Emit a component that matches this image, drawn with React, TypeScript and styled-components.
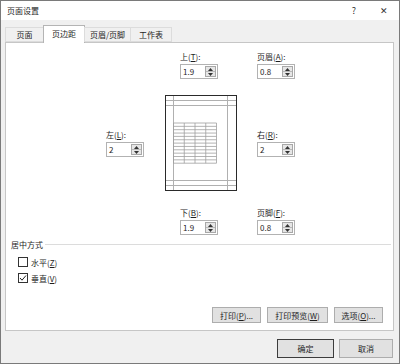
import React from "react";
import styled, { createGlobalStyle } from "styled-components";

const Global = createGlobalStyle`
  html, body { margin: 0; padding: 0; background: #fff; }
  body { font-family: "Noto Sans CJK SC", "Noto Sans", sans-serif; }
  * { box-sizing: border-box; }
`;

const Window = styled.div`
  width: 400px;
  height: 364px;
  border: 1px solid #7a7a7a;
  display: flex;
  flex-direction: column;
  background: #f0f0f0;
  font-family: "Noto Sans CJK SC", "Noto Sans", sans-serif;
  font-size: 8px;
  color: #1e1e1e;
  overflow: hidden;
`;

const TitleBar = styled.div`
  height: 19px;
  flex: none;
  background: #fff;
  display: flex;
  align-items: center;
  padding-left: 6px;
`;

const Title = styled.div`
  flex: 1;
  font-size: 8px;
  line-height: 12px;
`;

const TitleBtn = styled.div`
  width: 30px;
  height: 19px;
  display: flex;
  align-items: center;
  justify-content: center;
  font-size: 9px;
  color: #333;
`;

const Body = styled.div`
  flex: 1;
  display: flex;
  flex-direction: column;
  padding: 5px 5px 0 4px;
`;

const TabList = styled.div`
  height: 17px;
  display: flex;
  align-items: flex-end;
  padding-left: 1px;
  position: relative;
  z-index: 1;
`;

const Tab = styled.div<{ $active?: boolean; $w: number }>`
  width: ${(p) => p.$w}px;
  height: ${(p) => (p.$active ? 18 : 15)}px;
  margin-bottom: ${(p) => (p.$active ? -1 : 0)}px;
  margin-left: -1px;
  display: flex;
  align-items: center;
  justify-content: center;
  background: ${(p) => (p.$active ? "#fff" : "#f0f0f0")};
  border: 1px solid ${(p) => (p.$active ? "#b4b4b4" : "#dcdcdc")};
  border-bottom: ${(p) => (p.$active ? "none" : "1px solid #dcdcdc")};
  font-size: 8px;
  line-height: 12px;
  padding-bottom: ${(p) => (p.$active ? 2 : 0)}px;
`;

const Panel = styled.div`
  flex: 1;
  background: #fff;
  border: 1px solid #c6c6c6;
  display: flex;
  flex-direction: column;
  padding-top: 8px;
`;

const MarginGrid = styled.div`
  margin-left: 100px;
  display: grid;
  grid-template-columns: 59px 71px 21px 60px;
  grid-template-rows: auto 96px auto;
  row-gap: 16px;
`;

const Field = styled.div<{ $col: number; $row: number; $indent?: number }>`
  grid-column: ${(p) => p.$col};
  grid-row: ${(p) => p.$row};
  margin-left: ${(p) => p.$indent ?? 0}px;
  align-self: center;
  display: flex;
  flex-direction: column;
`;

const Label = styled.div`
  height: 13px;
  line-height: 12px;
  font-size: 8px;
  white-space: nowrap;
`;

const SpinBox = styled.div`
  width: 38px;
  height: 15px;
  border: 1px solid #b2b2b2;
  display: flex;
  align-items: stretch;
  background: #fff;
`;

const SpinValue = styled.div`
  flex: 1;
  padding-left: 2px;
  font-size: 8px;
  line-height: 13px;
`;

const Spinner = styled.div`
  width: 11px;
  margin: 1px 1px 1px 0;
  border: 1px solid #a8a8a8;
  background: #e6e6e6;
  display: flex;
  flex-direction: column;
`;

const SpinHalf = styled.div<{ $top?: boolean }>`
  flex: 1;
  display: flex;
  align-items: center;
  justify-content: center;
  border-bottom: ${(p) => (p.$top ? "1px solid #b8b8b8" : "none")};
`;

const Preview = styled.div`
  grid-column: 2;
  grid-row: 2;
  width: 72px;
  height: 96px;
`;

const GroupHeader = styled.div`
  margin-top: 4px;
  height: 12px;
  display: flex;
  align-items: center;
  padding-left: 5px;
  margin-right: 2px;
  gap: 2px;
  font-size: 8px;
  line-height: 12px;
`;

const Rule = styled.div`
  flex: 1;
  height: 1px;
  background: #dcdcdc;
  margin-top: -1px;
`;

const CheckList = styled.div`
  margin-top: 3px;
  padding-left: 12px;
  display: flex;
  flex-direction: column;
`;

const CheckRow = styled.div`
  height: 16px;
  display: flex;
  align-items: center;
  gap: 3px;
  font-size: 8px;
`;

const Box = styled.div`
  width: 10px;
  height: 10px;
  border: 1px solid #333;
  background: #fff;
  display: flex;
  align-items: center;
  justify-content: center;
`;

const PanelButtons = styled.div`
  margin-top: 21px;
  margin-right: 10px;
  display: flex;
  justify-content: flex-end;
  gap: 6px;
`;

const Button = styled.div<{ $w: number; $h: number; $default?: boolean }>`
  width: ${(p) => p.$w}px;
  height: ${(p) => p.$h}px;
  background: #e1e1e1;
  border: 1px solid ${(p) => (p.$default ? "#3c3c3c" : "#adadad")};
  display: flex;
  align-items: center;
  justify-content: center;
  font-size: 8px;
  white-space: nowrap;
`;

const DialogButtons = styled.div`
  height: 32px;
  flex: none;
  padding: 8px 1px 0 0;
  display: flex;
  justify-content: flex-end;
  gap: 5px;
`;

const Acc = styled.span`
  text-decoration: underline;
`;

const Up = () => (
  <svg width="5" height="3" viewBox="0 0 5 3">
    <path d="M0 3 L2.5 0 L5 3 Z" fill="#333" />
  </svg>
);
const Down = () => (
  <svg width="5" height="3" viewBox="0 0 5 3">
    <path d="M0 0 L2.5 3 L5 0 Z" fill="#333" />
  </svg>
);

const Spin = ({ value }: { value: string }) => (
  <SpinBox>
    <SpinValue>{value}</SpinValue>
    <Spinner>
      <SpinHalf $top>
        <Up />
      </SpinHalf>
      <SpinHalf>
        <Down />
      </SpinHalf>
    </Spinner>
  </SpinBox>
);

const PagePreview = () => {
  const rows = Array.from({ length: 13 }, (_, i) => 28 + i * 3.35);
  const cols = [8, 18.75, 29.5, 40.25, 51];
  return (
    <svg width="72" height="96" viewBox="0 0 72 96">
      <rect x="0.5" y="0.5" width="71" height="95" fill="#fff" stroke="#2a2a2a" />
      <g stroke="#b0b0b0" strokeWidth="1">
        <line x1="8.5" y1="1" x2="8.5" y2="95" />
        <line x1="62.5" y1="1" x2="62.5" y2="95" />
        <line x1="1" y1="5.5" x2="71" y2="5.5" />
        <line x1="1" y1="10.5" x2="71" y2="10.5" />
        <line x1="1" y1="85.5" x2="71" y2="85.5" />
        <line x1="1" y1="90.5" x2="71" y2="90.5" />
      </g>
      <g stroke="#a0a0a0" strokeWidth="0.8">
        {rows.map((y) => (
          <line key={y} x1="8.5" y1={y} x2="51.5" y2={y} />
        ))}
        {cols.map((x) => (
          <line key={x} x1={x + 0.5} y1="28" x2={x + 0.5} y2={rows[rows.length - 1]} />
        ))}
      </g>
    </svg>
  );
};

const Check = () => (
  <svg width="8" height="8" viewBox="0 0 8 8">
    <path d="M1 4 L3 6.2 L7 1.5" fill="none" stroke="#222" strokeWidth="1" />
  </svg>
);

const tabs = [
  { t: "页面", w: 39 },
  { t: "页边距", w: 42, active: true },
  { t: "页眉/页脚", w: 47 },
  { t: "工作表", w: 42 },
];

export default function App() {
  return (
    <>
      <Global />
      <Window>
        <TitleBar>
          <Title>页面设置</Title>
          <TitleBtn>?</TitleBtn>
          <TitleBtn>✕</TitleBtn>
        </TitleBar>
        <Body>
          <TabList>
            {tabs.map((t) => (
              <Tab key={t.t} $w={t.w} $active={t.active}>
                {t.t}
              </Tab>
            ))}
          </TabList>
          <Panel>
            <MarginGrid>
              <Field $col={2} $row={1} $indent={15}>
                <Label>
                  上(<Acc>T</Acc>):
                </Label>
                <Spin value="1.9" />
              </Field>
              <Field $col={4} $row={1}>
                <Label>
                  页眉(<Acc>A</Acc>):
                </Label>
                <Spin value="0.8" />
              </Field>
              <Field $col={1} $row={2}>
                <Label>
                  左(<Acc>L</Acc>):
                </Label>
                <Spin value="2" />
              </Field>
              <Preview>
                <PagePreview />
              </Preview>
              <Field $col={4} $row={2}>
                <Label>
                  右(<Acc>R</Acc>):
                </Label>
                <Spin value="2" />
              </Field>
              <Field $col={2} $row={3} $indent={15}>
                <Label>
                  下(<Acc>B</Acc>):
                </Label>
                <Spin value="1.9" />
              </Field>
              <Field $col={4} $row={3}>
                <Label>
                  页脚(<Acc>F</Acc>):
                </Label>
                <Spin value="0.8" />
              </Field>
            </MarginGrid>
            <GroupHeader>
              <span>居中方式</span>
              <Rule />
            </GroupHeader>
            <CheckList>
              <CheckRow>
                <Box />
                <span>
                  水平(<Acc>Z</Acc>)
                </span>
              </CheckRow>
              <CheckRow>
                <Box>
                  <Check />
                </Box>
                <span>
                  垂直(<Acc>V</Acc>)
                </span>
              </CheckRow>
            </CheckList>
            <PanelButtons>
              <Button $w={49} $h={16}>
                打印(<Acc>P</Acc>)...
              </Button>
              <Button $w={61} $h={16}>
                打印预览(<Acc>W</Acc>)
              </Button>
              <Button $w={49} $h={16}>
                选项(<Acc>O</Acc>)...
              </Button>
            </PanelButtons>
          </Panel>
          <DialogButtons>
            <Button $w={57} $h={19} $default>
              确定
            </Button>
            <Button $w={54} $h={19}>
              取消
            </Button>
          </DialogButtons>
        </Body>
      </Window>
    </>
  );
}
